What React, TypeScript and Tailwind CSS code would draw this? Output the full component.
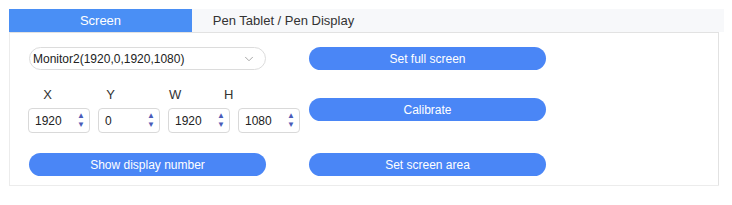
import { ChevronDown } from 'lucide-react';

const font = { fontFamily: '"Liberation Sans", Arial, sans-serif' };

function Stepper({ value }: { value: string }) {
  return (
    <div className="flex h-[25px] w-[62px] shrink-0 items-center justify-between rounded-[4px] border border-[#d9d9d9] bg-white pl-[6px] pr-[4px]">
      <span className="text-[12px] text-[#222]">{value}</span>
      <div className="flex flex-col items-center leading-none text-[#4a5bb8]">
        <span className="text-[8px]">▲</span>
        <span className="mt-[1px] text-[8px]">▼</span>
      </div>
    </div>
  );
}

function Pill({ label }: { label: string }) {
  return (
    <button className="flex h-[23px] w-[237px] items-center justify-center rounded-full bg-[#4a86f6] text-[12px] text-white">
      {label}
    </button>
  );
}

export default function App() {
  return (
    <div className="h-[205px] w-[732px] bg-white pl-[9px] pt-[9px]" style={font}>
      <div className="flex h-[23px] w-[715px] bg-[#f7f8fa] text-[13px]">
        <div className="flex w-[183px] items-center justify-center bg-[#4a8ff5] text-white">Screen</div>
        <div className="flex w-[183px] items-center justify-center text-[#333]">Pen Tablet / Pen Display</div>
      </div>
      <div className="h-[153px] w-[710px] border-t border-r border-l border-[#e2e2e2] border-l-[#ececec] pl-[19px] pt-[14px]">
        <div className="flex gap-[8px]">
          <div className="flex w-[272px] flex-col">
            <div className="flex h-[23px] w-[237px] items-center justify-between rounded-full border border-[#dcdcdc] pl-[3px] pr-[9px]">
              <span className="text-[12px] text-[#222]">Monitor2(1920,0,1920,1080)</span>
              <ChevronDown className="h-[14px] w-[14px] text-[#9a9a9a]" strokeWidth={1.5} />
            </div>
            <div className="mt-[17px] flex text-[13px] leading-[15px] text-[#333]">
              <span className="ml-[14px] w-[9px] text-center">X</span>
              <span className="ml-[54px] w-[9px] text-center">Y</span>
              <span className="ml-[54px] w-[12px] text-center">W</span>
              <span className="ml-[43px] w-[9px] text-center">H</span>
            </div>
            <div className="-ml-px mt-[6px] flex gap-[8px]">
              <Stepper value="1920" />
              <Stepper value="0" />
              <Stepper value="1920" />
              <Stepper value="1080" />
            </div>
            <div className="mt-[20px]">
              <Pill label="Show display number" />
            </div>
          </div>
          <div className="flex flex-col">
            <Pill label="Set full screen" />
            <div className="mt-[28px]">
              <Pill label="Calibrate" />
            </div>
            <div className="mt-[32px]">
              <Pill label="Set screen area" />
            </div>
          </div>
        </div>
      </div>
      <div className="h-px w-[710px] bg-[#ececec]" />
    </div>
  );
}
